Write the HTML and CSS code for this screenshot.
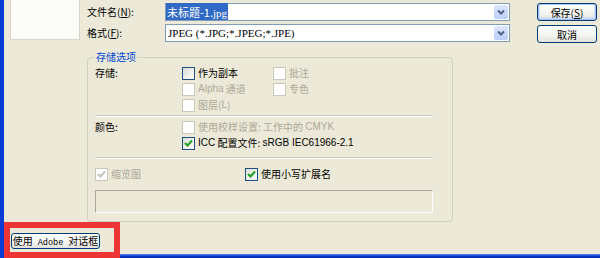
FILE: index.html
```html
<!DOCTYPE html>
<html lang="zh-CN">
<head>
    <meta charset="UTF-8">
    <meta name="viewport" content="width=device-width, initial-scale=1.0">
    <title>存储为</title>
    <link rel="stylesheet" href="styles.css">
</head>
<body>
    <div class="window">
        <div class="dialog">
            <div class="preview"></div>

            <div class="form">
                <div class="field">
                    <label class="field-label">文件名(<u>N</u>):</label>
                    <div class="combo">
                        <span class="combo-text"><span class="selected">未标题-1.<span class="serif">jpg</span></span></span>
                        <span class="drop"><svg width="14" height="14" viewBox="0 0 14 14"><path d="M4 5.5 L7 8.5 L10 5.5" fill="none" stroke="#4D6185" stroke-width="2"/></svg></span>
                    </div>
                </div>
                <div class="field">
                    <label class="field-label">格式(<u>F</u>):</label>
                    <div class="combo">
                        <span class="combo-text format">JPEG (*.JPG;*.JPEG;*.JPE)</span>
                        <span class="drop"><svg width="14" height="14" viewBox="0 0 14 14"><path d="M4 5.5 L7 8.5 L10 5.5" fill="none" stroke="#4D6185" stroke-width="2"/></svg></span>
                    </div>
                </div>

                <div class="group">
                    <div class="legend">存储选项</div>

                    <div class="section">
                        <div class="section-label">存储:</div>
                        <label class="check"><span class="box"></span>作为副本</label>
                        <label class="check disabled"><span class="box"></span>批注</label>
                        <label class="check disabled"><span class="box"></span><span class="latin">Alpha</span>&nbsp;通道</label>
                        <label class="check disabled"><span class="box"></span>专色</label>
                        <label class="check disabled"><span class="box"></span>图层(<span class="latin">L</span>)</label>
                    </div>

                    <div class="sep"></div>

                    <div class="section colors">
                        <div class="section-label">颜色:</div>
                        <label class="check disabled"><span class="box"></span>使用校样设置:&nbsp;工作中的&nbsp;<span class="latin">CMYK</span></label>
                        <label class="check"><span class="box"><svg width="11" height="11" viewBox="0 0 11 11"><path d="M2 5 L4.5 7.5 L9 2.5" fill="none" stroke="#21A121" stroke-width="2"/></svg></span><span class="latin">ICC</span>&nbsp;配置文件:&nbsp;<span class="latin">sRGB IEC61966-2.1</span></label>
                    </div>

                    <div class="sep sep-low"></div>

                    <div class="options">
                        <label class="check disabled"><span class="box"><svg width="11" height="11" viewBox="0 0 11 11"><path d="M2 5 L4.5 7.5 L9 2.5" fill="none" stroke="#C4C2B6" stroke-width="2"/></svg></span>缩览图</label>
                        <label class="check"><span class="box"><svg width="11" height="11" viewBox="0 0 11 11"><path d="M2 5 L4.5 7.5 L9 2.5" fill="none" stroke="#21A121" stroke-width="2"/></svg></span>使用小写扩展名</label>
                    </div>

                    <div class="note"></div>
                </div>
            </div>

            <div class="actions">
                <button class="btn default">保存(<u>S</u>)</button>
                <button class="btn">取消</button>
            </div>
        </div>

        <div class="footer">
            <button class="btn adobe">使用<span class="mono"> Adobe </span>对话框</button>
        </div>
        <div class="frame-bottom"></div>

        <div class="highlight"></div>
    </div>
</body>
</html>
```

FILE: styles.css
```css
body {
    margin: 0;
    font-family: "Noto Sans CJK SC", "Liberation Sans", sans-serif;
    font-size: 10px;
    color: #000;
}
.window {
    position: relative;
    width: 600px;
    height: 258px;
    box-sizing: border-box;
    border-left: 4px solid #0A3BD3;
    background: #ECE9D8;
    display: flex;
    flex-direction: column;
    overflow: hidden;
}
.dialog {
    display: flex;
    align-items: flex-start;
    padding: 3px 0 0 6px;
}
.preview {
    width: 70px;
    height: 40px;
    margin-top: -3px;
    box-sizing: border-box;
    background: #FBFBF8;
    border: 1px solid #D9D6C9;
    border-top: none;
}
.form {
    width: 423px;
    margin-left: 7px;
}
.field {
    display: flex;
    align-items: center;
    height: 18px;
    margin-bottom: 3px;
}
.field-label {
    width: 78px;
    line-height: 18px;
}
.combo {
    width: 345px;
    height: 18px;
    box-sizing: border-box;
    border: 1px solid #7F9DB9;
    background: #fff;
    display: flex;
    align-items: center;
}
.combo-text {
    line-height: 14px;
    font-size: 11px;
    white-space: nowrap;
}
.selected {
    background: #316AC5;
    color: #fff;
    padding: 1px 1px 0;
}
.serif {
    font-family: "Liberation Serif", serif;
    font-size: 11px;
}
.format {
    padding-left: 2px;
    font-family: "Liberation Serif", serif;
}
.drop {
    margin-left: auto;
    margin-right: 1px;
    width: 14px;
    height: 14px;
    border-radius: 2px;
    background: linear-gradient(#DCE6FD, #BCCFFA);
    display: flex;
}
.group {
    margin-top: 15px;
    width: 366px;
    box-sizing: border-box;
    border: 1px solid #D0D0BF;
    border-radius: 4px;
    padding: 0 19px 8px 7px;
}
.legend {
    width: fit-content;
    margin: -8px 0 0 0;
    padding: 0 1px;
    background: #ECE9D8;
    color: #0046D5;
    line-height: 14px;
}
.section {
    display: grid;
    grid-template-columns: 87px 91px 1fr;
    grid-auto-rows: 16px;
    margin-top: 1px;
}
.section-label {
    grid-row: span 3;
    line-height: 16px;
}
.colors {
    margin-top: 2px;
}
.colors .section-label {
    grid-row: span 2;
}
.colors .check {
    grid-column: 2 / 4;
}
.check {
    display: flex;
    align-items: center;
    line-height: 16px;
    white-space: nowrap;
}
.check.disabled {
    color: #ACA899;
}
.box {
    width: 13px;
    height: 13px;
    box-sizing: border-box;
    border: 1px solid #1C5180;
    background: linear-gradient(135deg, #DCDCD7, #FFFFFF);
    margin-right: 3px;
    display: inline-flex;
    flex-shrink: 0;
}
.check.disabled .box {
    border-color: #CAC8BB;
    background: #fff;
}
.latin {
    font-family: "Liberation Sans", sans-serif;
    font-size: 10px;
}
.sep {
    margin-top: 2px;
    border-top: 1px solid #C9C6B6;
    border-bottom: 1px solid #fff;
}
.sep-low {
    margin-top: 6px;
}
.options {
    display: grid;
    grid-template-columns: 150px 1fr;
    height: 16px;
    margin-top: 7px;
}
.note {
    margin-top: 8px;
    height: 23px;
    box-sizing: border-box;
    border: 1px solid #fff;
    border-top-color: #ACA899;
    border-left-color: #ACA899;
}
.actions {
    width: 60px;
    margin-left: 27px;
    display: flex;
    flex-direction: column;
    gap: 4px;
}
.btn {
    font: inherit;
    height: 18px;
    width: 60px;
    padding: 0;
    border: 1px solid #003C74;
    border-radius: 3px;
    background: linear-gradient(#FFFFFF, #F4F4F0 60%, #E3E2DA);
    color: #000;
    line-height: 15px;
    white-space: nowrap;
}
.btn.default {
    box-shadow: inset 0 0 0 1px #A9C2F3, inset 0 -1px 0 2px #CEDDFC;
}
.footer {
    flex: 1;
    padding: 11px 0 0 7px;
}
.btn.adobe {
    width: 89px;
    height: 16px;
    line-height: 14px;
}
.mono {
    font-family: "Liberation Mono", monospace;
    font-size: 8.5px;
    white-space: pre;
}
.frame-bottom {
    height: 4px;
    background: linear-gradient(#5A8CF0, #0A3BD3 50%, #0026A8);
}
.highlight {
    position: absolute;
    left: 0;
    top: 222px;
    width: 116px;
    height: 36px;
    box-sizing: border-box;
    border: 6px solid #EE3535;
}
```
